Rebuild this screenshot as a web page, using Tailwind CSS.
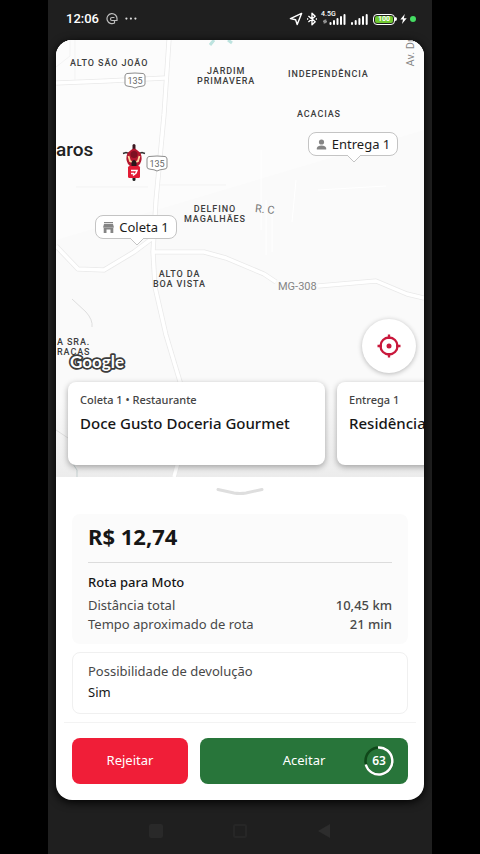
<!DOCTYPE html>
<html lang="pt-BR">
<head>
    <meta charset="UTF-8">
    <meta name="viewport" content="width=device-width, initial-scale=1.0">
    <title>Nova rota</title>
    <script src="https://cdn.jsdelivr.net/npm/@tailwindcss/browser@4"></script>
</head>
<body class="min-h-screen bg-black font-['Noto_Sans',sans-serif]">
    <div class="mx-12 min-h-screen flex flex-col bg-[#1f1f1f]">
        <!-- Status bar -->
        <header class="h-10 pl-[18px] pr-4 pb-[2px] flex items-center justify-between text-white font-['Roboto',sans-serif]">
            <div class="flex items-center gap-[7px]">
                <span class="text-[13px] font-medium">12:06</span>
                <svg class="w-3 h-3" viewBox="0 0 12 12" fill="none" stroke="#bdbdbd" stroke-width="1.2" stroke-linecap="round">
                    <path d="M8.500 10A5 5 0 1 1 11 6V7.500H6A1.500 1.500 0 0 1 6 4.500H8M8.500 10V7.500" />
                </svg>
                <svg class="w-3 h-3" viewBox="0 0 12 12" fill="#dedede">
                    <circle cx="1.4" cy="5.6" r="1.1" />
                    <circle cx="5.9" cy="5.6" r="1.1" />
                    <circle cx="10.4" cy="5.6" r="1.1" />
                </svg>
            </div>
            <div class="flex items-center gap-[3px]">
                <svg class="w-[14px] h-[14px]" viewBox="0 0 14 14" fill="none" stroke="#fff" stroke-width="1.4" stroke-linejoin="round">
                    <path d="M12.6 1.4 8.2 12.6 6.6 7.8 1.4 6.6z" />
                </svg>
                <svg class="w-[12px] h-[14px]" viewBox="0 0 12 14" fill="none" stroke="#fff" stroke-width="1.4" stroke-linejoin="round">
                    <path d="M2.4 4 9.2 9.8 6 12.8V1.2l3.2 3L2.4 10" />
                    <path d="M1 7h1.2M9.8 7H11" />
                </svg>
                <div class="flex items-end gap-1">
                    <div class="relative">
                        <span class="absolute left-0 -top-[3px] text-[7px] leading-[8px] font-medium">4.5G</span>
                        <svg class="w-[26px] h-3" viewBox="0 0 26 12" fill="#fff">
                            <path d="M2 8.500 3.500 6.500V10.500H2.800V8.500zM6 8.500 4.500 10.500V6.500H5.200V8.500z" />
                            <rect x="8.500" y="9" width="2" height="3" rx="1" />
                            <rect x="12" y="7" width="2" height="5" rx="1" />
                            <rect x="15.500" y="5" width="2" height="7" rx="1" />
                            <rect x="19" y="3" width="2" height="9" rx="1" />
                            <rect x="22.500" y="1" width="2" height="11" rx="1" />
                        </svg>
                    </div>
                    <svg class="w-[17px] h-3" viewBox="0 0 17 12" fill="#fff">
                        <rect x="0" y="9" width="2" height="3" rx="1" />
                        <rect x="3.700" y="7" width="2" height="5" rx="1" />
                        <rect x="7.400" y="5" width="2" height="7" rx="1" />
                        <rect x="11" y="3" width="2" height="9" rx="1" />
                        <rect x="14.700" y="1" width="2" height="11" rx="1" />
                    </svg>
                </div>
                <div class="ml-[2px] flex items-center">
                    <div class="w-[22px] h-[11px] p-px rounded-[4px] border border-white flex">
                        <span class="flex-1 rounded-[2px] bg-[#70c931] text-center text-[7px] leading-[7px] font-bold">100</span>
                    </div>
                    <div class="w-[2px] h-1 rounded-r bg-white"></div>
                </div>
                <svg class="w-[7px] h-[10px]" viewBox="0 0 7 10" fill="#fff">
                    <path d="M4.800 0 .3 5.600H3L2 10l4.700-5.800H3.800z" />
                </svg>
                <div class="w-[6px] h-[6px] rounded-full bg-[#45dc63]"></div>
            </div>
        </header>

        <main class="mx-2 flex-1 flex flex-col rounded-2xl overflow-hidden bg-white shadow-[0_2px_10px_#000]">
            <!-- Mapa -->
            <section class="relative h-[437px] overflow-hidden bg-[#fafafa] font-['Roboto',sans-serif] text-[#3d3d3d]">
                <svg class="absolute inset-0 w-full h-full" viewBox="0 0 368 437" preserveAspectRatio="xMinYMin slice" fill="none" stroke-linejoin="round">
                    <defs>
                        <linearGradient id="fade" x1="0" y1="0" x2="0" y2="1">
                            <stop offset="0" stop-color="#ececec" stop-opacity="0" />
                            <stop offset="1" stop-color="#ececec" />
                        </linearGradient>
                    </defs>
                    <path d="M0 0H368V90L0 200z" fill="#fcfcfc" />
                    <path d="M0 360H368V437H0z" fill="url(#fade)" />
                    <g stroke="#e9e9e9" stroke-width="5">
                        <path d="M113 0 108 75 100 160 97 212 99 247 110 295 125 345 128 400 118 437" />
                        <path d="M0 43 50 41 109 38" />
                        <path d="M0 206 22 229 48 230 78 212 98 197" />
                        <path d="M97 212H148L170 218 208 234 220 242M262 246 320 241 351 254 368 258" />
                    </g>
                    <g stroke="#fff" stroke-width="3.500">
                        <path d="M113 0 108 75 100 160 97 212 99 247 110 295 125 345 128 400 118 437" />
                        <path d="M0 43 50 41 109 38" />
                        <path d="M0 206 22 229 48 230 78 212 98 197" />
                        <path d="M97 212H148L170 218 208 234 220 242M262 246 320 241 351 254 368 258" />
                    </g>
                    <g stroke="#f3f3f3">
                        <path d="M0 27 14 16V0M19 0V40M20 147H92M104 145H170" />
                    </g>
                    <path d="M205 110V190M210 160V215M216 165V212M240 140 236 182M262 150 330 146" stroke="#fff" />
                    <path d="M16 259 30 272Q37 280 36 287M0 390 12 398" stroke="#dedede" />
                    <path d="M17 424 21 430V437" stroke="#c3cfcf" />
                    <path d="M154 5 158 0M172 0 176 3" stroke="#bde3df" stroke-width="3" />
                </svg>

                <span class="absolute left-[14px] top-[18px] text-[9px] leading-[11px] font-medium tracking-widest">ALTO SÃO JOÃO</span>
                <span class="absolute left-[141px] top-[26px] text-center text-[9px] leading-[10px] font-medium tracking-widest">JARDIM<br>PRIMAVERA</span>
                <span class="absolute left-[232px] top-[29px] text-[9px] leading-[11px] font-medium tracking-widest">INDEPENDÊNCIA</span>
                <span class="absolute left-[241px] top-[69px] text-[9px] leading-[11px] font-medium tracking-widest">ACACIAS</span>
                <span class="absolute left-[128px] top-[164px] text-center text-[9px] leading-[10px] font-medium tracking-widest">DELFINO<br>MAGALHÃES</span>
                <span class="absolute left-[97px] top-[229px] text-center text-[9px] leading-[10px] font-medium tracking-widest">ALTO DA<br>BOA VISTA</span>
                <span class="absolute -left-[6px] top-[297px] text-center text-[9px] leading-[10px] font-medium tracking-widest">ÇA SRA.<br>GRAÇAS</span>
                <span class="absolute left-0 top-[98px] text-[19px] leading-6 font-medium text-[#222]">aros</span>
                <span class="absolute left-[222px] top-[241px] text-[11px] leading-3 text-[#858585]">MG-308</span>
                <span class="absolute left-[199px] top-[164px] rotate-6 text-[11px] leading-3 text-[#777]">R. C</span>
                <span class="absolute left-[349px] -top-1 [writing-mode:vertical-rl] rotate-180 text-[11px] leading-3 text-[#858585]">Av. Dr.</span>

                <!-- Placas da rodovia -->
                <svg class="absolute left-[68px] top-[32px] w-[22px] h-[17px]" viewBox="0 0 22 17">
                    <path d="M3 1.500Q11 .5 19 1.500 21 2 21 4V12Q21 14 18 14.200 13.500 14.500 11 16 8.500 14.500 4 14.200 1 14 1 12V4Q1 2 3 1.500z" fill="#fff" stroke="#8c8c8c" />
                    <text x="11" y="11.500" text-anchor="middle" font-size="9" fill="#666">135</text>
                </svg>
                <svg class="absolute left-[90px] top-[115px] w-[22px] h-[17px]" viewBox="0 0 22 17">
                    <path d="M3 1.500Q11 .5 19 1.500 21 2 21 4V12Q21 14 18 14.200 13.500 14.500 11 16 8.500 14.500 4 14.200 1 14 1 12V4Q1 2 3 1.500z" fill="#fff" stroke="#8c8c8c" />
                    <text x="11" y="11.500" text-anchor="middle" font-size="9" fill="#666">135</text>
                </svg>

                <!-- Moto do entregador -->
                <svg class="absolute left-[66px] top-[104px] w-6 h-[37px]" viewBox="0 0 24 37">
                    <path d="M1 9.500 4 8.500 9 10M23 9.500 20 8.500 15 10" fill="none" stroke="#333" stroke-width="1.500" />
                    <rect x="10.500" y="0" width="3" height="8" rx="1.500" fill="#3b1820" />
                    <rect x="10.500" y="30" width="3" height="7" rx="1.500" fill="#222" />
                    <path d="M9 6Q12 3 15 6L18.500 9Q21 15 18 20L15 23H9L6 20Q3 15 5.500 9z" fill="#b3172f" />
                    <circle cx="12" cy="10.500" r="3.500" fill="#7d1022" />
                    <path d="M6.500 12 8 17 11 18.500M17.500 12 16 17 13 18.500" fill="none" stroke="#ffd3a0" stroke-width="1.800" />
                    <path d="M9.500 18Q12 14 14.500 18V22H9.500z" fill="#29161a" />
                    <rect x="6" y="22" width="12" height="12" rx="1.500" fill="#e31c35" />
                    <path d="M9 26.500H15L14 29 11 31.500M9 29.500H12" fill="none" stroke="#fff" stroke-width="1.500" />
                </svg>

                <!-- Pinos -->
                <div class="absolute left-[39px] top-[175px] h-6 w-[82px] flex items-center justify-center gap-[5px] rounded-lg border border-[#c4c4c4] bg-white text-[#1c1c1c] font-['Noto_Sans',sans-serif]">
                    <svg class="w-[11px] h-[11px]" viewBox="0 0 11 11" fill="#858585">
                        <path d="M1 0H10V1.300H1zM1 2H10L11 5.500H0z" />
                        <path d="M.7 5.500H10.300V11H.7zM3.500 7.500V11H7.500V7.500z" fill-rule="evenodd" />
                    </svg>
                    <span class="text-[13px] leading-4">Coleta 1</span>
                    <svg class="absolute left-[34px] top-[22px] w-[14px] h-2" viewBox="0 0 14 8">
                        <path d="M0 0 7 7 14 0" fill="#fff" stroke="#c4c4c4" />
                    </svg>
                </div>
                <div class="absolute left-[252px] top-[92px] h-6 w-[90px] flex items-center justify-center gap-[5px] rounded-lg border border-[#c4c4c4] bg-white text-[#1c1c1c] font-['Noto_Sans',sans-serif]">
                    <svg class="w-[11px] h-[11px]" viewBox="0 0 11 11" fill="#858585">
                        <circle cx="5.500" cy="3" r="2.600" />
                        <path d="M.8 10.500V9Q1.500 6.500 5.500 6.500T10.200 9V10.500z" />
                    </svg>
                    <span class="text-[13px] leading-4">Entrega 1</span>
                    <svg class="absolute left-[38px] top-[22px] w-[14px] h-2" viewBox="0 0 14 8">
                        <path d="M0 0 7 7 14 0" fill="#fff" stroke="#c4c4c4" />
                    </svg>
                </div>

                <svg class="absolute left-[11px] top-[310px] w-[62px] h-6" viewBox="0 0 62 24">
                    <text x="3" y="18" font-family="Lato, sans-serif" font-size="17" font-weight="700" fill="#fff" stroke="#3c3c3c" stroke-width="3.500" stroke-linejoin="round" paint-order="stroke">Google</text>
                </svg>

                <button type="button" aria-label="Centralizar mapa" class="absolute right-2 top-[279px] w-[54px] h-[54px] rounded-full bg-white flex items-center justify-center shadow-[0_1px_5px_#0004]">
                    <svg class="w-6 h-6" viewBox="0 0 24 24" fill="none" stroke="#c9183c" stroke-width="2.300">
                        <circle cx="12" cy="12" r="8.500" />
                        <circle cx="12" cy="12" r="2.500" fill="#c9183c" stroke="none" />
                        <path d="M12 .5V5M12 19V23.500M.5 12H5M19 12H23.500" />
                    </svg>
                </button>

                <!-- Paradas -->
                <div class="absolute inset-x-0 bottom-3 pl-3 flex gap-3 font-['Noto_Sans',sans-serif] whitespace-nowrap">
                    <article class="w-[257px] h-[83px] shrink-0 rounded-lg bg-white px-3 py-2 shadow-[0_2px_6px_#0005]">
                        <p class="text-[11px] leading-5 font-medium text-[#444]">Coleta 1 • Restaurante</p>
                        <h2 class="pt-px text-[15px] leading-6 font-medium text-[#161616]">Doce Gusto Doceria Gourmet</h2>
                    </article>
                    <article class="w-[257px] h-[83px] shrink-0 rounded-lg bg-white px-3 py-2 shadow-[0_2px_6px_#0005]">
                        <p class="text-[11px] leading-5 font-medium text-[#444]">Entrega 1</p>
                        <h2 class="pt-px text-[15px] leading-6 font-medium text-[#161616]">Residência</h2>
                    </article>
                </div>
            </section>

            <!-- Detalhes da rota -->
            <section class="flex-1 flex flex-col px-4">
                <div class="h-[37px] pt-[10px] flex justify-center">
                    <svg class="w-12 h-[10px]" viewBox="0 0 48 10" fill="none" stroke="#dedede" stroke-width="3" stroke-linecap="round">
                        <path d="M2 2.500 18 6Q24 7 30 6L46 2.500" />
                    </svg>
                </div>
                <div class="h-[130px] px-4 pt-2 rounded-lg bg-[#fbfbfb]">
                    <p class="h-10 text-[22px] leading-7 font-bold text-[#161616]">R$ 12,74</p>
                    <hr class="border-[#dcdcdc]">
                    <h3 class="pt-[9px] text-[13px] leading-5 font-medium text-[#161616]">Rota para Moto</h3>
                    <dl class="pt-1 text-[13px] leading-[19px] text-[#484848]">
                        <div class="flex justify-between">
                            <dt>Distância total</dt>
                            <dd class="font-medium">10,45 km</dd>
                        </div>
                        <div class="flex justify-between">
                            <dt>Tempo aproximado de rota</dt>
                            <dd class="font-medium">21 min</dd>
                        </div>
                    </dl>
                </div>
                <div class="mt-2 h-[62px] px-[15px] py-2 rounded-lg border border-[#f0f0f0] text-[13px] leading-[21px]">
                    <p class="text-[#484848]">Possibilidade de devolução</p>
                    <p class="text-[#161616]">Sim</p>
                </div>
                <div class="-mx-2 mt-2 border-t border-[#f3f3f3]"></div>
                <div class="pt-[15px] pb-4 flex gap-3 text-[13px] text-white">
                    <button type="button" class="h-[46px] w-[116px] rounded-lg bg-[#f01e38]">Rejeitar</button>
                    <button type="button" class="relative h-[46px] flex-1 rounded-lg bg-[#28753a]">
                        Aceitar
                        <span class="absolute right-[14px] top-2 w-[30px] h-[30px] flex items-center justify-center text-xs font-semibold">
                            <svg class="absolute inset-0" viewBox="0 0 30 30" fill="none" stroke-width="2.500">
                                <circle cx="15" cy="15" r="13.500" stroke="#0f4719" />
                                <path d="M14 1.500A13.500 13.500 0 1 1 1.800 18.500" stroke="#fff" />
                            </svg>
                            63
                        </span>
                    </button>
                </div>
            </section>
        </main>

        <!-- Navegação do sistema -->
        <footer class="h-[54px] pt-6 flex justify-center gap-[70px]">
            <div class="w-[14px] h-[14px] rounded-[2px] bg-[#292929]"></div>
            <div class="w-[14px] h-[14px] rounded-[2px] border-2 border-[#262626]"></div>
            <svg class="w-[14px] h-[14px]" viewBox="0 0 14 14" fill="#2d2d2d">
                <path d="M13 0V14L1 7z" />
            </svg>
        </footer>
    </div>
</body>
</html>
